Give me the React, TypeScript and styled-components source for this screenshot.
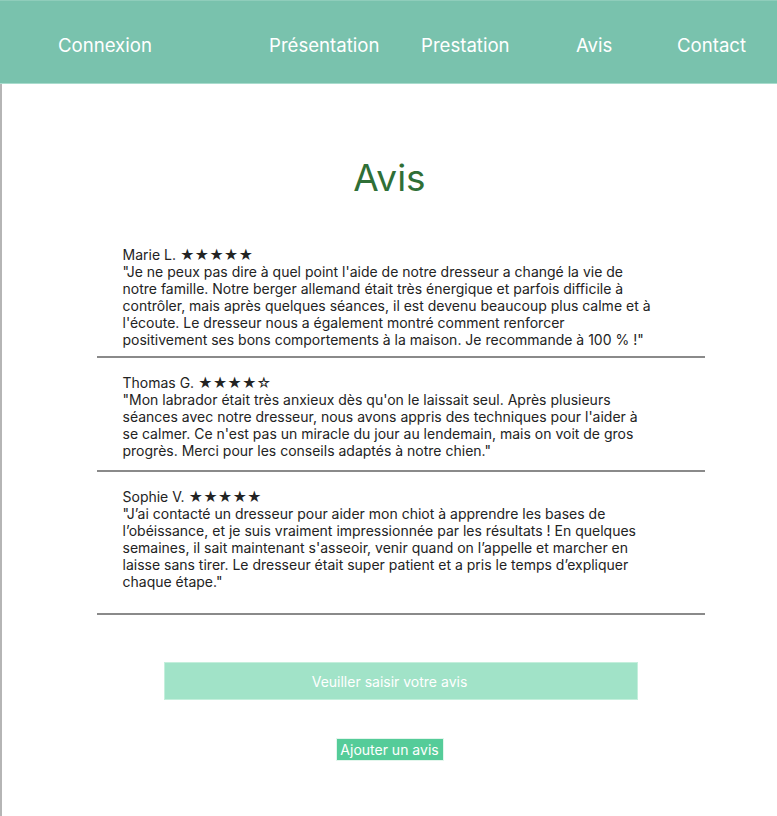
import React from "react";
import styled, { createGlobalStyle } from "styled-components";

const Global = createGlobalStyle`
  html, body { margin: 0; padding: 0; background: #ffffff; }
  body { font-family: Inter, "Noto Sans", sans-serif; }
  * { box-sizing: border-box; }
`;

const Header = styled.header`
  height: 84px;
  padding: 6px 0 0 58px;
  background: #79c2ad;
  border-top: 1px solid #8fcdbb;
  border-bottom: 1px solid #a9dccd;
  display: grid;
  grid-template-columns: 211px 152px 155px 101px auto;
  align-items: center;
`;

const NavItem = styled.a`
  color: #ffffff;
  font-size: 18.6px;
  line-height: 22px;
  text-decoration: none;
  white-space: nowrap;
`;

const Main = styled.main`
  border-left: 2px solid #b5b5b5;
  min-height: 732px;
  display: flex;
  flex-direction: column;
  align-items: center;
`;

const Title = styled.h1`
  margin: 72px 0 46px;
  font-size: 37px;
  line-height: 44px;
  font-weight: 400;
  color: #2f6f36;
`;

const List = styled.section`
  width: 608px;
  margin-left: 22px;
  display: flex;
  flex-direction: column;
`;

const Review = styled.article<{ $top: number; $bottom: number }>`
  padding: ${(p) => p.$top}px 52px ${(p) => p.$bottom}px 26px;
  border-bottom: 2px solid #8a8a8a;
  color: #232323;
  font-size: 14px;
  line-height: 17px;
`;

const Author = styled.div``;

const Text = styled.p`
  margin: 0;
`;

const Input = styled.input`
  margin: 47px 0 0 22px;
  padding: 0 22px 0 0;
  width: 474px;
  height: 38px;
  background: #a1e3c8;
  border: 1px solid #c4efdc;
  text-align: center;
  font-family: Inter, "Noto Sans", sans-serif;
  font-size: 14px;
  color: #ffffff;
  outline: none;
  &::placeholder { color: #ffffff; }
`;

const Button = styled.button`
  margin-top: 38px;
  width: 108px;
  height: 23px;
  padding: 0;
  background: #55cc99;
  border: 1px solid #e2f6ec;
  color: #ffffff;
  font-family: Inter, "Noto Sans", sans-serif;
  font-size: 14px;
  line-height: 20px;
`;

const reviews = [
  {
    name: "Marie L.",
    stars: "★★★★★",
    text: "\"Je ne peux pas dire à quel point l'aide de notre dresseur a changé la vie de notre famille. Notre berger allemand était très énergique et parfois difficile à contrôler, mais après quelques séances, il est devenu beaucoup plus calme et à l'écoute. Le dresseur nous a également montré comment renforcer positivement ses bons comportements à la maison. Je recommande à 100 % !\"",
    top: 0,
    bottom: 8,
  },
  {
    name: "Thomas G.",
    stars: "★★★★☆",
    text: "\"Mon labrador était très anxieux dès qu'on le laissait seul. Après plusieurs séances avec notre dresseur, nous avons appris des techniques pour l'aider à se calmer. Ce n'est pas un miracle du jour au lendemain, mais on voit de gros progrès. Merci pour les conseils adaptés à notre chien.\"",
    top: 16,
    bottom: 11,
  },
  {
    name: "Sophie V.",
    stars: "★★★★★",
    text: "\"J’ai contacté un dresseur pour aider mon chiot à apprendre les bases de l’obéissance, et je suis vraiment impressionnée par les résultats ! En quelques semaines, il sait maintenant s'asseoir, venir quand on l’appelle et marcher en laisse sans tirer. Le dresseur était super patient et a pris le temps d’expliquer chaque étape.\"",
    top: 16,
    bottom: 23,
  },
];

export default function App() {
  return (
    <>
      <Global />
      <Header>
        <NavItem>Connexion</NavItem>
        <NavItem>Présentation</NavItem>
        <NavItem>Prestation</NavItem>
        <NavItem>Avis</NavItem>
        <NavItem>Contact</NavItem>
      </Header>
      <Main>
        <Title>Avis</Title>
        <List>
          {reviews.map((r) => (
            <Review key={r.name} $top={r.top} $bottom={r.bottom}>
              <Author>
                {r.name} {r.stars}
              </Author>
              <Text>{r.text}</Text>
            </Review>
          ))}
        </List>
        <Input placeholder="Veuiller saisir votre avis" />
        <Button>Ajouter un avis</Button>
      </Main>
    </>
  );
}
